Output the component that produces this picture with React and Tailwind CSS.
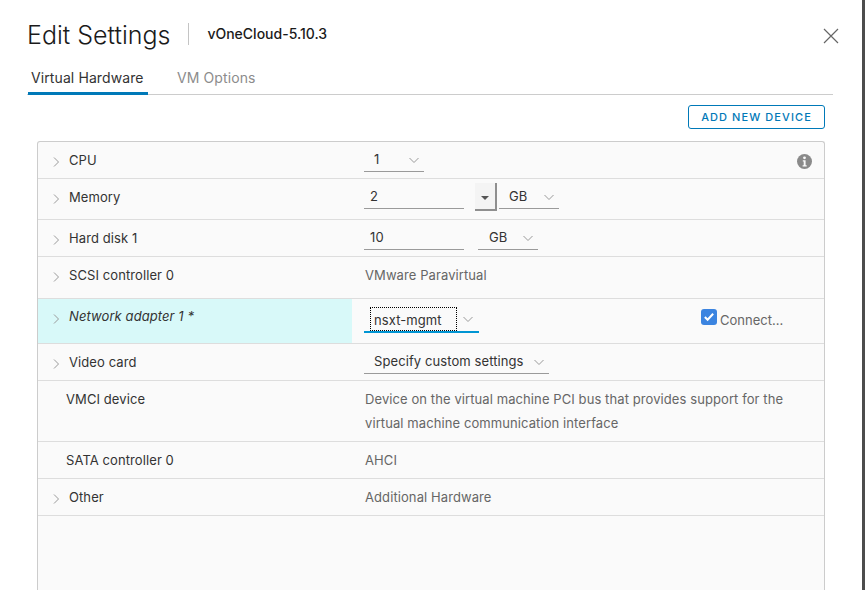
import React from 'react';

const Chevron = ({ dir = 'down', className = '' }) => (
  <svg width="12" height="12" viewBox="0 0 12 12" fill="none" stroke="#9a9a9a" strokeWidth="1" className={`shrink-0 ${className}`}>
    {dir === 'down' ? <path d="M1.5 4l4.5 4.5L10.500 4" /> : <path d="M4 1.500L8.500 6 4 10.500" />}
  </svg>
);

const Underlined = ({ width, children, className = '' }) => (
  <div className={`flex items-center h-[26px] pt-[3px] border-b border-[#9a9a9a] text-[13px] tracking-[0.09px] text-[#333] ${width} ${className}`}>
    {children}
  </div>
);

const Row = ({ height, label, expand = true, active = false, children, right }) => (
  <div className={`flex border-b border-[#dddddd] ${height}`}>
    <div className={`w-[314px] shrink-0 flex items-start text-[13px] tracking-[0.09px] ${active ? 'pt-[8px] bg-[#d8f9f9] italic text-[#333]' : 'pt-[9px] text-[#333]'} ${expand ? 'pl-[12px]' : 'pl-[28px]'}`}>
      {expand && <Chevron dir="right" className={`${active ? 'mt-[6px]' : 'mt-[5px]'} mr-[7px]`} />}
      <span>{label}</span>
    </div>
    <div className="flex-1 relative pl-[12px]">
      {children}
      {right}
    </div>
  </div>
);

export default function App() {
  return (
    <div className="w-[865px] h-[590px] overflow-hidden bg-white flex font-['Inter',sans-serif]">
      <div className="w-[862px] shrink-0 relative">
        {/* Header */}
        <div className="flex items-center pl-[27px] pt-[21px] h-[48px]">
          <h1 className="text-[25px] leading-[30px] text-[#1a1a1a] font-light">Edit Settings</h1>
          <div className="w-px h-[22px] bg-[#c4c4c4] mx-[18px] mt-[-2px]" />
          <span className="text-[14px] font-medium text-[#1a1a1a] mt-[-2px]">vOneCloud-5.10.3</span>
        </div>
        <button className="absolute left-[823px] top-[28px] text-[#666]" aria-label="Close">
          <svg width="16" height="16" viewBox="0 0 16 16" fill="none" stroke="#666" strokeWidth="1.200">
            <path d="M1 1l14 14M15 1L1 15" />
          </svg>
        </button>

        {/* Tabs */}
        <div className="flex ml-[27px] mr-[29px] mt-[16px] h-[31px] border-b border-[#cccccc]">
          <div className="h-[31px] w-[120px] pl-[3px] border-b-[3px] border-[#0079b8] text-[14px] tracking-[0.1px] leading-[28px] text-[#333] ml-px whitespace-nowrap">Virtual Hardware</div>
          <div className="ml-[29px] text-[14px] tracking-[0.1px] leading-[28px] text-[#8c8c8c]">VM Options</div>
        </div>

        {/* Toolbar */}
        <div className="flex justify-end pr-[37px] pt-[10px] h-[46px]">
          <button className="w-[137px] h-[24px] rounded-[3px] border border-[#0079b8] text-[11px] tracking-[1.08px] text-[#0079b8] font-medium">
            ADD NEW DEVICE
          </button>
        </div>

        {/* Device table */}
        <div className="ml-[37px] w-[788px] h-[460px] bg-[#fafafa] border border-b-0 border-[#cccccc] rounded-t-[3px]">
          <Row height="h-[37px]" label="CPU" right={
            <svg width="15" height="15" viewBox="0 0 15 15" className="absolute right-[12px] top-[12px]">
              <circle cx="7.500" cy="7.500" r="7.500" fill="#8a8a8a" />
              <circle cx="7.500" cy="3.800" r="1.400" fill="#fafafa" />
              <path d="M5.800 6.300h2.800v5h1.100v1.100H5.600v-1.100h1.100V7.400H5.800z" fill="#fafafa" />
            </svg>
          }>
            <Underlined width="w-[60px]" className="pl-[10px] mt-[4px] justify-between pr-[4px]">1<Chevron /></Underlined>
          </Row>
          <Row height="h-[41px]" label="Memory">
            <div className="flex items-start mt-[4px]">
              <Underlined width="w-[100px]" className="pl-[6px]">2</Underlined>
              <div className="w-[22px] h-[28px] ml-[11px] bg-[#f4f4f4] border-r-2 border-b-2 border-[#8f8f8f] flex items-center justify-center pt-[3px]">
                <div className="w-0 h-0 border-l-[4px] border-r-[4px] border-t-[4px] border-l-transparent border-r-transparent border-t-[#555]" />
              </div>
              <Underlined width="w-[60px]" className="ml-[2px] pl-[10px] justify-between pr-[4px]">GB<Chevron /></Underlined>
            </div>
          </Row>
          <Row height="h-[37px]" label="Hard disk 1">
            <div className="flex items-start mt-[4px]">
              <Underlined width="w-[100px]" className="pl-[6px]">10</Underlined>
              <Underlined width="w-[60px]" className="ml-[14px] pl-[11px] justify-between pr-[4px]">GB<Chevron /></Underlined>
            </div>
          </Row>
          <Row height="h-[42px]" label="SCSI controller 0">
            <div className="pt-[9px] pl-px text-[13px] tracking-[0.09px] text-[#666]">VMware Paravirtual</div>
          </Row>
          <Row height="h-[45px]" label="Network adapter 1 *" active right={
            <div className="absolute left-[349px] top-[10px] flex items-start">
              <div className="w-[16px] h-[16px] rounded-[3px] bg-[#3b84e0] flex items-center justify-center">
                <svg width="12" height="12" viewBox="0 0 13 13" fill="none" stroke="#fff" strokeWidth="2.200">
                  <path d="M2 6.500l3 3 6-6.500" />
                </svg>
              </div>
              <span className="ml-[3px] mt-[3px] text-[13px] leading-[16px] text-[#666]">Connect...</span>
            </div>
          }>
            <div className="flex items-center w-[115px] h-[27px] mt-[7px] border-b-2 border-[#0095d3] text-[13px] tracking-[0.09px] text-[#333] justify-between pr-[5px]">
              <span className="ml-[6px] w-[87px] h-[24px] mt-[1px] pl-[3px] leading-[24px] border border-dotted border-black">nsxt-mgmt</span>
              <Chevron />
            </div>
          </Row>
          <Row height="h-[37px]" label="Video card">
            <Underlined width="w-[185px]" className="pl-[10px] mt-[4px] justify-between pr-[4px] whitespace-nowrap">Specify custom settings<Chevron /></Underlined>
          </Row>
          <Row height="h-[61px]" label="VMCI device" expand={false}>
            <div className="pt-[6px] pl-px text-[13px] tracking-[0.09px] leading-[24px] text-[#666] whitespace-nowrap">
              Device on the virtual machine PCI bus that provides support for the<br />
              virtual machine communication interface
            </div>
          </Row>
          <Row height="h-[37px]" label="SATA controller 0" expand={false}>
            <div className="pt-[9px] pl-px text-[13px] tracking-[0.09px] text-[#666]">AHCI</div>
          </Row>
          <Row height="h-[37px]" label="Other">
            <div className="pt-[9px] pl-px text-[13px] tracking-[0.09px] text-[#666]">Additional Hardware</div>
          </Row>
        </div>
      </div>
      <div className="flex-1 bg-[#4d4d4d]" />
    </div>
  );
}
